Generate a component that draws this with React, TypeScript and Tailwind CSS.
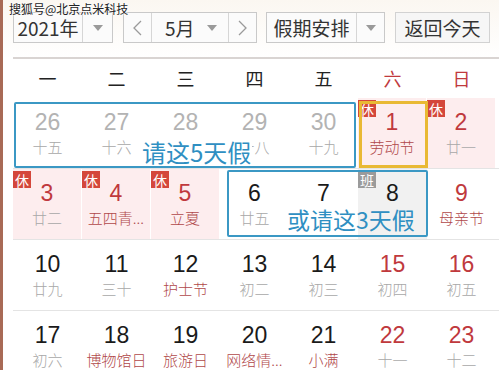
import React from "react";

type Day = {
  n: string;
  l?: string;
  nc: "gray" | "black" | "red";
  lc?: "gray" | "red";
  bg?: "pink" | "gray";
  badge?: "休" | "班";
};

const rows: Day[][] = [
  [
    { n: "26", l: "十五", nc: "gray", lc: "gray" },
    { n: "27", l: "十六", nc: "gray", lc: "gray" },
    { n: "28", nc: "gray" },
    { n: "29", l: "十八", nc: "gray", lc: "gray" },
    { n: "30", l: "十九", nc: "gray", lc: "gray" },
    { n: "1", l: "劳动节", nc: "red", lc: "red", bg: "pink", badge: "休" },
    { n: "2", l: "廿一", nc: "red", lc: "gray", bg: "pink", badge: "休" },
  ],
  [
    { n: "3", l: "廿二", nc: "red", lc: "gray", bg: "pink", badge: "休" },
    { n: "4", l: "五四青...", nc: "red", lc: "red", bg: "pink", badge: "休" },
    { n: "5", l: "立夏", nc: "red", lc: "red", bg: "pink", badge: "休" },
    { n: "6", l: "廿五", nc: "black", lc: "gray" },
    { n: "7", nc: "black" },
    { n: "8", nc: "black", bg: "gray", badge: "班" },
    { n: "9", l: "母亲节", nc: "red", lc: "red" },
  ],
  [
    { n: "10", l: "廿九", nc: "black", lc: "gray" },
    { n: "11", l: "三十", nc: "black", lc: "gray" },
    { n: "12", l: "护士节", nc: "black", lc: "red" },
    { n: "13", l: "初二", nc: "black", lc: "gray" },
    { n: "14", l: "初三", nc: "black", lc: "gray" },
    { n: "15", l: "初四", nc: "red", lc: "gray" },
    { n: "16", l: "初五", nc: "red", lc: "gray" },
  ],
  [
    { n: "17", l: "初六", nc: "black", lc: "gray" },
    { n: "18", l: "博物馆日", nc: "black", lc: "red" },
    { n: "19", l: "旅游日", nc: "black", lc: "red" },
    { n: "20", l: "网络情...", nc: "black", lc: "red" },
    { n: "21", l: "小满", nc: "black", lc: "red" },
    { n: "22", l: "十一", nc: "red", lc: "gray" },
    { n: "23", l: "十二", nc: "red", lc: "gray" },
  ],
];

const cjk = { fontFamily: '"Noto Sans CJK SC", "Liberation Sans", sans-serif' };
const num = { fontFamily: '"Liberation Sans", Arial, sans-serif' };

function Caret() {
  return (
    <svg width="10" height="6" viewBox="0 0 10 6">
      <path d="M0 0 L10 0 L5 6 Z" fill="#9a9a9a" />
    </svg>
  );
}

function Cell({ d }: { d: Day }) {
  const numColor =
    d.nc === "gray" ? "text-[#b3b3b3]" : d.nc === "red" ? "text-[#c0393d]" : "text-[#1a1a1a]";
  const lunColor = d.lc === "red" ? "text-[#b0484a]" : "text-[#a8a8a8]";
  const bg =
    d.bg === "pink" ? "bg-[#fdedee] border-r border-white" : d.bg === "gray" ? "bg-[#f1f1f1]" : "";
  return (
    <div className={`relative flex h-[70px] flex-col items-center pt-[11px] ${bg}`}>
      {d.badge && (
        <div
          className={`absolute left-0 top-[2px] flex h-[17px] w-[18px] items-center justify-center text-[14px] leading-none text-white ${
            d.badge === "休" ? "bg-[#d4473b]" : "bg-[#9b9b9b]"
          }`}
          style={cjk}
        >
          {d.badge}
        </div>
      )}
      <div className={`text-[23px] leading-[26px] ${numColor}`} style={num}>
        {d.n}
      </div>
      {d.l && (
        <div className={`mt-[2px] whitespace-nowrap text-[15px] font-light leading-[20px] ${lunColor}`} style={cjk}>
          {d.l}
        </div>
      )}
    </div>
  );
}

export default function App() {
  const weekdays = ["一", "二", "三", "四", "五", "六", "日"];
  return (
    <div className="relative h-[370px] w-[499px] overflow-hidden border-l-[3px] border-[#a86a56] bg-white" style={cjk}>
      <div className="bg-gradient-to-b from-[#fbf7f1] to-white pl-[10px] pt-[12px]">
        <div className="flex items-center text-[#333]">
          <div className="flex h-[31px] w-[100px] border border-[#c9c9c9] bg-[#fbfbfb]">
            <div className="flex w-[69px] items-center justify-center border-r border-[#d6d6d6] text-[19px] leading-none">
              2021年
            </div>
            <div className="flex flex-1 items-center justify-center">
              <Caret />
            </div>
          </div>
          <div className="ml-[10px] flex h-[31px] w-[134px] border border-[#c9c9c9] bg-[#fbfbfb]">
            <div className="flex w-[28px] items-center justify-center border-r border-[#d6d6d6]">
              <svg width="9" height="16" viewBox="0 0 9 16">
                <path d="M8 1 L1 8 L8 15" fill="none" stroke="#9a9a9a" strokeWidth="1.3" />
              </svg>
            </div>
            <div className="flex flex-1 items-center border-r border-[#d6d6d6] pl-[13px] pr-[11px]">
              <span className="text-[19px] leading-none">5月</span>
              <span className="ml-auto">
                <Caret />
              </span>
            </div>
            <div className="flex w-[27px] items-center justify-center">
              <svg width="9" height="16" viewBox="0 0 9 16">
                <path d="M1 1 L8 8 L1 15" fill="none" stroke="#9a9a9a" strokeWidth="1.3" />
              </svg>
            </div>
          </div>
          <div className="ml-[9px] flex h-[31px] w-[119px] border border-[#c9c9c9] bg-[#fbfbfb]">
            <div className="flex w-[90px] items-center justify-center border-r border-[#d6d6d6] text-[19px] leading-none">
              假期安排
            </div>
            <div className="flex flex-1 items-center justify-center">
              <Caret />
            </div>
          </div>
          <div className="ml-[10px] flex h-[31px] w-[95px] items-center justify-center border border-[#d2d2d2] bg-[#f6f6f6] text-[19px] leading-none">
            返回今天
          </div>
        </div>
        <div className="mt-[14px] border-t-2 border-[#d9d4d2]" />
      </div>
      <div className="pl-[10px]">
        <div className="grid h-[39px] w-[483px] grid-cols-7 items-center text-[18px]">
          {weekdays.map((w, i) => (
            <div key={w} className={`text-center ${i >= 5 ? "text-[#c0393d]" : "text-[#222]"}`}>
              {w}
            </div>
          ))}
        </div>
        <div className="relative w-[486px]">
          {rows.map((r, i) => (
            <div key={i} className="grid grid-cols-[repeat(7,69px)] border-b border-[#e4e4e4]">
              {r.map((d, j) => (
                <Cell key={j} d={d} />
              ))}
            </div>
          ))}
          <div className="absolute left-[1px] top-[4px] h-[66px] w-[342px] rounded-[2px] border-2 border-[#3b98c4]" />
          <div className="absolute left-[346px] top-[3px] h-[67px] w-[69px] border-[3px] border-[#e9b934]" />
          <div className="absolute left-[214px] top-[72px] h-[67px] w-[201px] rounded-[2px] border-2 border-[#3b98c4]" />
          <div className="absolute left-[129px] top-[40px] bg-white pr-[1px] text-[24px] leading-[28px] text-[#2f8fc2]">
            请这5天假
          </div>
          <div className="absolute left-[274px] top-[108px] text-[23px] leading-[26px] text-[#2f8fc2]">
            或请这3天假
          </div>
        </div>
      </div>
      <div
        className="absolute left-[6px] top-[2px] text-[12px] leading-[14px] text-[#222]"
        style={{ textShadow: "0 0 2px #fff, 0 0 2px #fff, 0 0 1px #fff" }}
      >
        搜狐号@北京点米科技
      </div>
    </div>
  );
}
